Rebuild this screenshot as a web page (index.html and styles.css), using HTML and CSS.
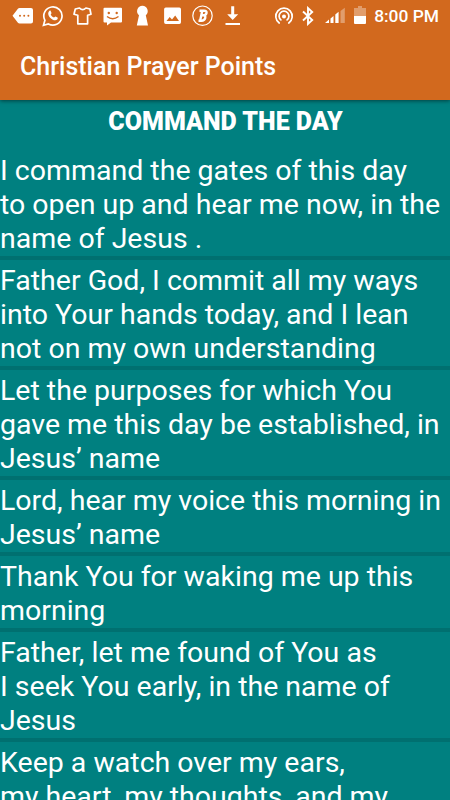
FILE: index.html
```html
<!DOCTYPE html>
<html lang="en">
<head>
  <meta charset="UTF-8" />
  <meta name="viewport" content="width=device-width, initial-scale=1.0"/>
  <title>Christian Prayer Points</title>
  <link rel="stylesheet" href="styles.css">
</head>
<body>
  <!-- Header: status bar + title -->
  <header class="header">
    <div class="status-bar">
      <div class="status-left">
        <svg width="22" height="22" viewBox="0 0 22 22">
          <path fill="#fff" d="M7.500 3H19q2 0 2 2v11.500q0 2-2 2H7.500q-1 0-1.600-.8L.5 10.800l5.400-7Q6.500 3 7.500 3z"/>
          <g fill="#d2691e"><circle cx="8" cy="10.800" r="1"/><circle cx="12.200" cy="10.800" r="1"/><circle cx="16.400" cy="10.800" r="1"/></g>
        </svg>
        <svg width="22" height="22" viewBox="0 0 22 22">
          <path fill="none" stroke="#fff" stroke-width="1.700" d="M1.500 20.300l1.400-5a9.100 9.100 0 1 1 3.500 3.600z"/>
          <path fill="#fff" d="M7.500 5.700c.5-.3 1-.2 1.200.3l.8 1.900c.1.500-.7 1.100-.8 1.500.7 1.500 1.800 2.500 3.300 3.200.5-.1 1-1.100 1.500-1l2 1c.5.300.2 1.500-.3 2-2 1.700-4.800.2-6.500-1.400C6.800 11.500 4.900 8 7.500 5.700z"/>
        </svg>
        <svg width="22" height="22" viewBox="0 0 22 22">
          <path fill="none" stroke="#fff" stroke-width="1.700" stroke-linejoin="round" d="M7.500 3L3.300 4 2 9.200l3.800 1v8.600h9.800v-8.600l3.400-1L17.900 4l-4-1q-3.300 3.400-6.400 0z"/>
        </svg>
        <svg width="22" height="22" viewBox="0 0 22 22">
          <path fill="#fff" d="M2.500 2.700h16.500q1 0 1 1v12.800q0 1-1 1H9L5 20.500v-3H2.500q-1 0-1-1V3.700q0-1 1-1z"/>
          <g fill="#d2691e"><circle cx="6.800" cy="8" r="1.200"/><circle cx="14.700" cy="8" r="1.200"/></g>
          <path fill="none" stroke="#d2691e" stroke-width="1.400" d="M5 11.500q5.700 4.500 11.500 0"/>
        </svg>
        <svg width="22" height="22" viewBox="0 0 22 22">
          <path fill="#fff" d="M10.400.7a5.400 5.400 0 0 1 3.400 9.500L16 20.400H4.800L7 10.200A5.400 5.400 0 0 1 10.400.7z"/>
        </svg>
        <svg width="22" height="22" viewBox="0 0 22 22">
          <path fill="#fff" fill-rule="evenodd" d="M3.800 2.500h13.500q1.700 0 1.700 1.700v13q0 1.700-1.700 1.700H3.800q-1.700 0-1.700-1.700v-13q0-1.700 1.700-1.700zM4.500 16h12.500l-3.800-5.500-3.200 4-2.300-2.500z"/>
        </svg>
        <svg width="22" height="22" viewBox="0 0 22 22">
          <circle cx="10.500" cy="10.700" r="9.700" fill="none" stroke="#fff" stroke-width="1.200"/>
          <path fill="none" stroke="#fff" stroke-width="2.400" stroke-linejoin="round" d="M7.500 5.700h4.500c4.200 0 2.800 4.600-.8 4.600 3.800.2 2.100 5.400-1.700 5.400H6.500M10.300 5.700L8.100 15.700M9.500 10.300h2"/>
        </svg>
        <svg width="22" height="22" viewBox="0 0 22 22">
          <path fill="#fff" d="M9.200 1.300h3v8h4l-5.500 5.700L5.200 9.300h4zM3.500 18H18v2H3.500z"/>
        </svg>
      </div>
      <div class="status-right">
        <svg class="hotspot" width="20" height="20" viewBox="0 0 20 20">
          <g fill="none" stroke="#fff" stroke-width="1.700" stroke-linecap="round">
            <path d="M5.200 17a8.200 8.200 0 1 1 9.600 0"/>
            <path d="M6.900 13.900a4.900 4.900 0 1 1 6.200 0"/>
          </g>
          <circle cx="10" cy="10.500" r="2" fill="#fff"/>
        </svg>
        <svg class="bluetooth" width="14" height="20" viewBox="0 0 14 20">
          <path fill="none" stroke="#fff" stroke-width="1.900" d="M2 5.500l9.200 8.500L7 17.900V2.100L11.200 6 2 14.500"/>
        </svg>
        <svg class="signal" width="20" height="18" viewBox="0 0 20 18">
          <path fill="#fff" d="M0 16l4-3.500V16zM5.500 11.500l3-2.500v7h-3zM10.300 7.500l3.300-2.700V16h-3.300z"/>
          <path fill="#fff" fill-opacity=".35" d="M15.500 4L19.800.8V16h-4.300z"/>
        </svg>
        <svg class="battery" width="12" height="19" viewBox="0 0 12 19">
          <path fill="#fff" fill-opacity=".35" d="M4 0h4v2h4v8H0V2h4z"/>
          <path fill="#fff" d="M0 10h12v7q0 1-1 1H1q-1 0-1-1z"/>
        </svg>
        <span class="time">8:00 PM</span>
      </div>
    </div>
    <h1 class="title">Christian Prayer Points</h1>
  </header>

  <!-- Prayer list -->
  <main>
    <h2 class="heading">COMMAND THE DAY</h2>
    <ul class="prayers">
      <li>I command the gates of this day<br/>to open up and hear me now, in the<br/>name of Jesus .</li>
      <li>Father God, I commit all my ways<br/>into Your hands today, and I lean<br/>not on my own understanding</li>
      <li>Let the purposes for which You<br/>gave me this day be established, in<br/>Jesus’ name</li>
      <li>Lord, hear my voice this morning in<br/>Jesus’ name</li>
      <li>Thank You for waking me up this<br/>morning</li>
      <li>Father, let me found of You as<br/>I seek You early, in the name of<br/>Jesus</li>
      <li>Keep a watch over my ears,<br/>my heart, my thoughts, and my</li>
    </ul>
  </main>
</body>
</html>
```
FILE: styles.css
```css
body {
  margin: 0;
  height: 100vh;
  font-family: Roboto, sans-serif;
  color: white;
  background-color: #008080;
  overflow: hidden;
}

.header {
  position: relative;
  height: 100px;
  background-color: #d2691e;
  box-shadow: 0 1px 4px rgba(0, 0, 0, 0.5);
}

.status-bar {
  display: flex;
  justify-content: space-between;
  height: 32px;
  padding: 0 11px 0 12px;
}

.status-left,
.status-right {
  display: flex;
  align-items: center;
}

.status-left {
  gap: 8px;
}

.status-right {
  padding-bottom: 1px;
}

.bluetooth {
  margin-left: 7px;
}

.signal {
  margin-left: 10px;
}

.battery {
  margin-left: 9px;
}

.time {
  margin-left: 8px;
  font-size: 17.4px;
  font-weight: 500;
  white-space: nowrap;
}

.title {
  margin: 0;
  padding-left: 20px;
  font-size: 25px;
  font-weight: 500;
  line-height: 69px;
}

.heading {
  margin: 0;
  padding: 5px 0 0 1px;
  text-align: center;
  font-size: 25px;
  font-weight: 900;
  line-height: 34px;
}

.prayers {
  list-style: none;
  margin: 11px 0 0;
  padding: 0;
}

.prayers li {
  padding-top: 4px;
  border-bottom: 4px solid #007070;
  font-size: 28.5px;
  line-height: 34px;
  white-space: nowrap;
}
```
